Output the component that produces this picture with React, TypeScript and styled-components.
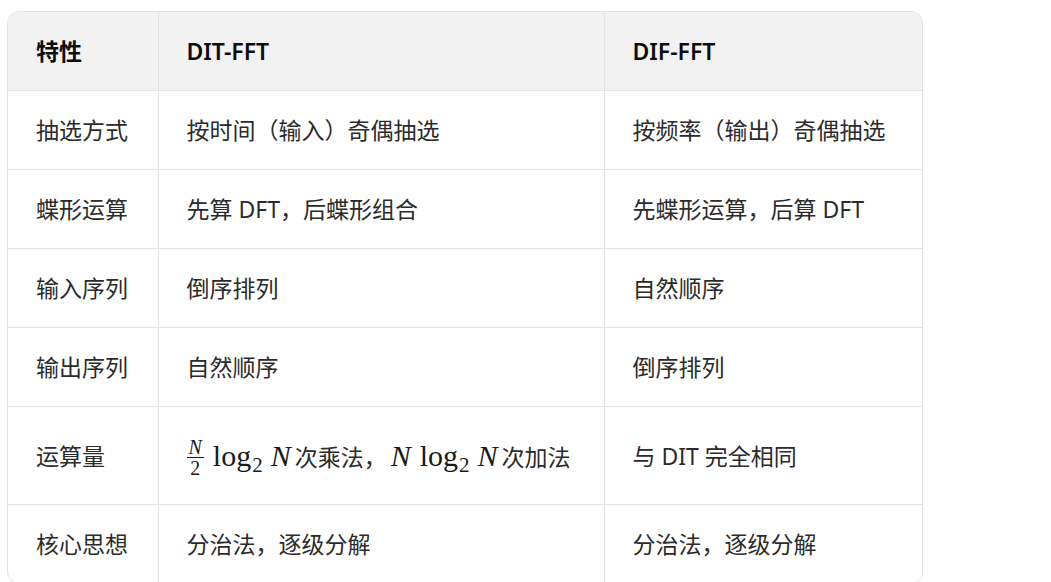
import React from 'react';
import styled, { createGlobalStyle } from 'styled-components';

const GlobalStyle = createGlobalStyle`
    html, body {
        margin: 0;
        padding: 0;
        background: #ffffff;
    }
`;

const Page = styled.div`
    padding: 11px 0 0 7px;
    font-family: 'Noto Sans', 'Noto Sans CJK SC', sans-serif;
`;

const Frame = styled.div`
    width: 916px;
    border: 1px solid #e3e3e3;
    border-radius: 12px;
    overflow: hidden;
    box-sizing: border-box;
`;

const Table = styled.table`
    width: 100%;
    border-collapse: collapse;
    table-layout: fixed;
`;

const Th = styled.th`
    background: #f2f2f2;
    color: #0d0d0d;
    font-size: 23px;
    font-weight: 600;
    line-height: 34px;
    text-align: left;
    padding: 22px 28px;
    border-bottom: 1px solid #e3e3e3;
    border-left: 1px solid #e3e3e3;
    white-space: nowrap;

    &:first-child {
        border-left: none;
    }
`;

const Td = styled.td`
    color: #2b2b2b;
    font-size: 23px;
    line-height: 34px;
    padding: 22px 28px;
    border-bottom: 1px solid #e3e3e3;
    border-left: 1px solid #e3e3e3;
    vertical-align: middle;
    white-space: nowrap;

    &:first-child {
        border-left: none;
    }
`;

const Row = styled.tr`
    &:last-child td {
        border-bottom: none;
    }
`;

const Math = styled.span`
    display: inline-block;
    height: 53px;
    line-height: 53px;
    font-family: 'Liberation Serif', 'DejaVu Serif', serif;
    font-size: 30px;
    color: #1a1a1a;
`;

const Var = styled.i`
    font-style: italic;
    padding-right: 4px;
`;

const Op = styled.span<{ $before?: number }>`
    margin-left: ${(p) => p.$before ?? 0}px;
    margin-right: 8px;
`;

const Sub = styled.span`
    font-size: 21px;
    position: relative;
    top: 6px;
    margin-left: 1px;
`;

const Frac = styled.span`
    display: inline-flex;
    flex-direction: column;
    align-items: center;
    vertical-align: middle;
    font-size: 20px;
    line-height: 20px;
    margin-right: 9px;
    position: relative;
    top: -2px;
`;

const Num = styled.span`
    font-style: italic;
    padding: 0 2px;
    border-bottom: 1px solid #1a1a1a;
`;

const Den = styled.span`
    padding-top: 0;
`;

const Cjk = styled.span<{ $gap?: number }>`
    font-family: 'Noto Sans', 'Noto Sans CJK SC', sans-serif;
    font-size: 23px;
    color: #2b2b2b;
    margin-right: ${(p) => p.$gap ?? 0}px;
`;

const Log = ({ before }: { before?: number }) => (
    <Op $before={before}>
        log<Sub>2</Sub>
    </Op>
);

const Complexity = () => (
    <Math>
        <Frac>
            <Num>N</Num>
            <Den>2</Den>
        </Frac>
        <Log />
        <Var>N</Var>
        <Cjk $gap={4}>次乘法，</Cjk>
        <Var>N</Var>
        <Log before={5} />
        <Var>N</Var>
        <Cjk>次加法</Cjk>
    </Math>
);

type Item = { label: string; dit: React.ReactNode; dif: string };

const rows: Item[] = [
    { label: '抽选方式', dit: '按时间（输入）奇偶抽选', dif: '按频率（输出）奇偶抽选' },
    { label: '蝶形运算', dit: '先算 DFT，后蝶形组合', dif: '先蝶形运算，后算 DFT' },
    { label: '输入序列', dit: '倒序排列', dif: '自然顺序' },
    { label: '输出序列', dit: '自然顺序', dif: '倒序排列' },
    { label: '运算量', dit: <Complexity />, dif: '与 DIT 完全相同' },
    { label: '核心思想', dit: '分治法，逐级分解', dif: '分治法，逐级分解' },
];

const App = () => (
    <Page>
        <GlobalStyle />
        <Frame>
            <Table>
                <colgroup>
                    <col style={{ width: 150 }} />
                    <col style={{ width: 446 }} />
                    <col />
                </colgroup>
                <thead>
                    <tr>
                        <Th>特性</Th>
                        <Th>DIT-FFT</Th>
                        <Th>DIF-FFT</Th>
                    </tr>
                </thead>
                <tbody>
                    {rows.map((r) => (
                        <Row key={r.label}>
                            <Td>{r.label}</Td>
                            <Td>{r.dit}</Td>
                            <Td>{r.dif}</Td>
                        </Row>
                    ))}
                </tbody>
            </Table>
        </Frame>
    </Page>
);

export default App;
